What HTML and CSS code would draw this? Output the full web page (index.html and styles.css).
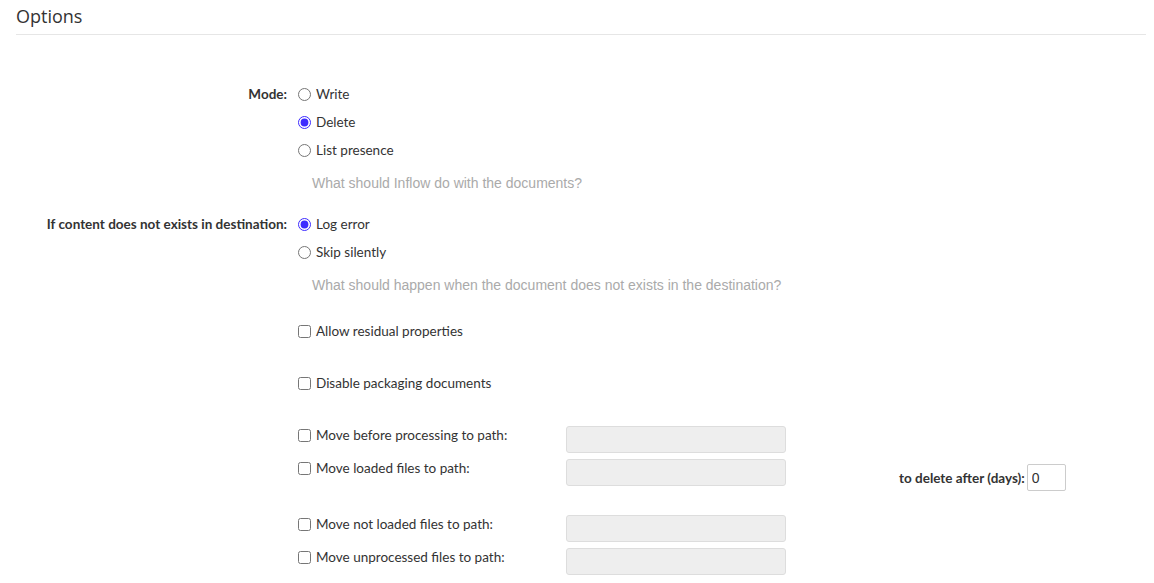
FILE: index.html
```html
<!DOCTYPE html>
<html>
<head>
<meta charset="utf-8">
<link rel="stylesheet" href="styles.css">
</head>
<body>
<div class="page">
  <h2 class="title">Options</h2>
  <div class="form">
    <div class="group mode">
      <div class="label">Mode:</div>
      <div class="controls">
        <label class="opt"><input type="radio" name="mode"> Write</label>
        <label class="opt"><input type="radio" name="mode" checked> Delete</label>
        <label class="opt"><input type="radio" name="mode"> List presence</label>
        <div class="help">What should Inflow do with the documents?</div>
      </div>
    </div>
    <div class="group missing">
      <div class="label">If content does not exists in destination:</div>
      <div class="controls">
        <label class="opt"><input type="radio" name="miss" checked> Log error</label>
        <label class="opt"><input type="radio" name="miss"> Skip silently</label>
        <div class="help">What should happen when the document does not exists in the destination?</div>
      </div>
    </div>
    <div class="group check residual">
      <div class="label"></div>
      <div class="controls"><label class="opt"><input type="checkbox"> Allow residual properties</label></div>
    </div>
    <div class="group check packaging">
      <div class="label"></div>
      <div class="controls"><label class="opt"><input type="checkbox"> Disable packaging documents</label></div>
    </div>
    <div class="group paths">
      <div class="label"></div>
      <div class="controls">
        <div class="path-row">
          <label class="opt path-label"><input type="checkbox"> Move before processing to path:</label>
          <input class="path-input" type="text" disabled>
        </div>
        <div class="path-row loaded">
          <label class="opt path-label"><input type="checkbox"> Move loaded files to path:</label>
          <input class="path-input" type="text" disabled>
          <div class="days">
            <span class="days-label">to delete after (days):</span>
            <input class="days-input" type="text" value="0">
          </div>
        </div>
        <div class="path-row spaced">
          <label class="opt path-label"><input type="checkbox"> Move not loaded files to path:</label>
          <input class="path-input" type="text" disabled>
        </div>
        <div class="path-row">
          <label class="opt path-label"><input type="checkbox"> Move unprocessed files to path:</label>
          <input class="path-input" type="text" disabled>
        </div>
      </div>
    </div>
  </div>
</div>
</body>
</html>
```
FILE: styles.css
```css
html, body {
  margin: 0;
  padding: 0;
  background: #fff;
}
body {
  font-family: Lato, "Open Sans", sans-serif;
  color: #333;
  font-size: 13.5px;
}
.page {
  padding: 0 8px 0 16px;
}
.title {
  margin: 0;
  padding: 6px 0 7px;
  font-family: "Open Sans", sans-serif;
  font-weight: 400;
  font-size: 18px;
  line-height: 21px;
  color: #333;
  border-bottom: 1px solid #e6e6e6;
}
.form {
  padding-top: 45px;
}
.group {
  display: flex;
  align-items: flex-start;
}
.label {
  width: 271px;
  flex: none;
  text-align: right;
  font-weight: 700;
  line-height: 28px;
  padding-right: 11px;
}
.controls {
  flex: 1;
  display: flex;
  flex-direction: column;
}
.opt {
  display: flex;
  align-items: center;
  height: 28px;
  line-height: 28px;
}
.opt input {
  margin: 0 5px 0 0;
  width: 13px;
  height: 13px;
}
.opt input[type=radio] {
  accent-color: #3d2bff;
}
.help {
  font-family: "Liberation Sans", Arial, sans-serif;
  color: #aaa;
  font-size: 14px;
  line-height: 20px;
  padding: 9px 0 17px 14px;
}
.missing .help {
  padding-bottom: 22px;
}
.packaging {
  margin-top: 24px;
}
.paths {
  margin-top: 24px;
}
.path-row {
  display: flex;
  align-items: flex-start;
  height: 33px;
}
.path-row.loaded {
  height: 56px;
}
.path-label {
  width: 268px;
  flex: none;
}
.path-input {
  box-sizing: border-box;
  width: 220px;
  height: 27px;
  margin: 5px 0 0;
  border: 1px solid #ddd;
  border-radius: 3px;
  background: #eee;
}
.days {
  margin-left: 113px;
  margin-top: 10px;
  display: flex;
  align-items: center;
}
.days-label {
  font-weight: 700;
  margin-right: 2px;
}
.days-input {
  box-sizing: border-box;
  width: 39px;
  height: 27px;
  margin: 0;
  border: 1px solid #ccc;
  border-radius: 2px;
  padding: 0 4px;
  font-family: "Liberation Sans", Arial, sans-serif;
  font-size: 14px;
  color: #333;
}
```
